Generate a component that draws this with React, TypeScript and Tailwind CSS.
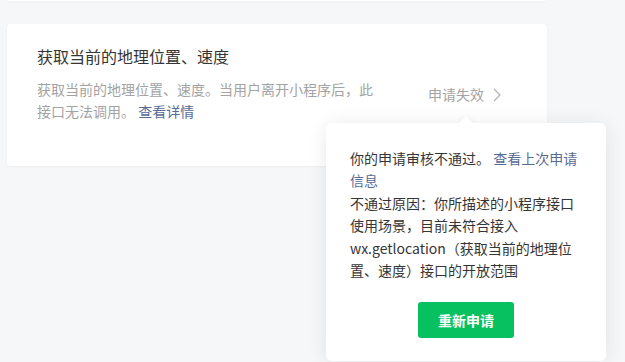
const font = { fontFamily: '"Noto Sans CJK SC", "Noto Sans", sans-serif' };

function Chevron() {
  return (
    <svg width="8" height="14" viewBox="0 0 8 14" fill="none" className="ml-[9px]">
      <path d="M1 1l6 6-6 6" stroke="#b2b2b2" strokeWidth="1.2" />
    </svg>
  );
}

function Popover() {
  return (
    <div className="absolute left-[319px] top-[99px] w-[280px] h-[238px] bg-white rounded-[6px] shadow-[0_2px_20px_rgba(0,0,0,0.09)]">
      <div className="absolute left-[135px] -top-[5px] w-[10px] h-[10px] bg-white rotate-45 shadow-[0_0_6px_rgba(0,0,0,0.06)]" />
      <div className="relative bg-white rounded-[6px] h-full px-[24px] pt-[24px] text-[14px] leading-[22.4px] text-[#353535]">
        <p>
          你的申请审核不通过。 <a className="text-[#576b95]">查看上次申请信息</a>
        </p>
        <p>不通过原因：你所描述的小程序接口使用场景，目前未符合接入wx.getlocation（获取当前的地理位置、速度）接口的开放范围</p>
        <div className="flex justify-center mt-[21px]">
          <button className="w-[96px] h-[36px] rounded-[3px] bg-[#07c160] text-white text-[14px] font-bold">
            重新申请
          </button>
        </div>
      </div>
    </div>
  );
}

export default function App() {
  return (
    <div style={font} className="w-[625px] h-[362px] bg-[#f6f7f9] overflow-hidden pl-[7px]">
      <div className="ml-[1px] w-[537px] h-[1px] bg-white shadow-[0_1px_3px_rgba(0,0,0,0.06)]" />
      <div className="relative mt-[23px] w-[540px] h-[142px] bg-white rounded-[4px] shadow-[0_1px_3px_rgba(0,0,0,0.04)] flex">
        <div className="pl-[30px] pt-[20px]">
          <h3 className="text-[16px] leading-[24px] text-[#353535] font-normal">获取当前的地理位置、速度</h3>
          <p className="mt-[10px] w-[340px] text-[14px] leading-[22px] text-[#a3a3a3]">
            获取当前的地理位置、速度。当用户离开小程序后，此接口无法调用。 <a className="text-[#576b95]">查看详情</a>
          </p>
        </div>
        <div className="ml-auto self-center flex items-center pr-[46px] text-[14px] text-[#a3a3a3] -mt-[1px]">
          申请失效
          <Chevron />
        </div>
        <Popover />
      </div>
    </div>
  );
}
